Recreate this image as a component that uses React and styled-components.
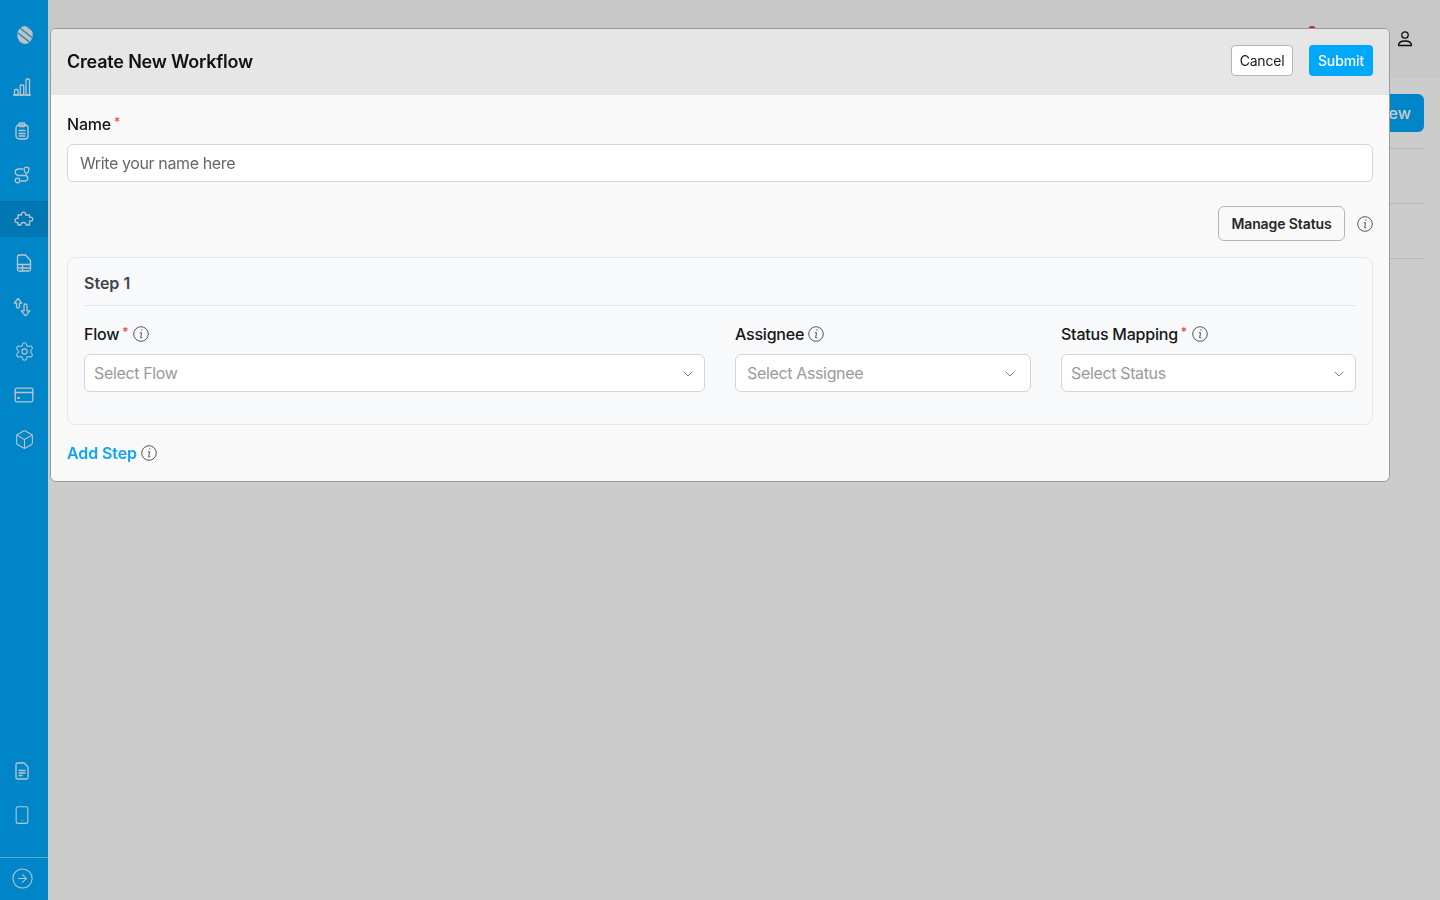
import React from "react";
import styled, { createGlobalStyle } from "styled-components";
import { Settings, Box, ChevronDown, Smartphone, CircleArrowRight } from "lucide-react";

const Global = createGlobalStyle`
  * { box-sizing: border-box; }
  html, body { margin: 0; height: 100%; }
  body { font-family: Inter, "Liberation Sans", sans-serif; background: #fff; overflow: hidden; }
`;

const Page = styled.div`display: flex; height: 900px; width: 1440px;`;
const Sidebar = styled.aside`width: 48px; flex: none; background: #00a8fb; display: flex; flex-direction: column; color: #e8f8ff;`;
const Logo = styled.div`height: 69px; display: flex; align-items: center; justify-content: center; padding: 1px 0 0 1px;`;
const NavList = styled.nav`display: flex; flex-direction: column; gap: 8px;`;
const NavItem = styled.div`
  height: 36px; display: flex; align-items: center; justify-content: center;
  padding-right: ${p => (p.$shift ? 4 : 0)}px;
  background: ${p => (p.$active ? "#0095df" : "transparent")};
`;
const Spacer = styled.div`flex: 1;`;
const SideBottom = styled(NavList)`padding-bottom: 24px;`;
const Collapse = styled.div`height: 43px; border-top: 1px solid #7fd0f8; display: flex; align-items: center; justify-content: center; padding: 0 4px 1px 0;`;

const Main = styled.main`flex: 1; min-width: 0; display: flex; flex-direction: column;`;
const TopBar = styled.header`height: 78px; background: #fafafa; display: flex; justify-content: flex-end; align-items: center; gap: 82px; padding: 0 26px 0 0; color: #111;`;
const BellSlot = styled.div`position: relative; width: 20px; height: 20px; margin-top: -2px;`;
const Dot = styled.span`position: absolute; left: 14px; top: -2px; width: 8px; height: 8px; border-radius: 50%; background: #ef3b2d;`;
const UserSlot = styled.div`display: flex;`;
const Content = styled.section`padding: 16px 16px 0 16px;`;
const ContentHead = styled.div`display: flex; justify-content: flex-end; margin-bottom: 16px;`;
const AddNew = styled.button`height: 38px; padding: 0 13px; border: 0; border-radius: 6px; background: #00a8fb; color: #fff; font: 500 16px Inter, sans-serif;`;
const Row = styled.div`height: 55px; border-top: 1px solid #e5e7eb; &:last-child { border-bottom: 1px solid #e5e7eb; height: 56px; }`;

const Backdrop = styled.div`position: fixed; inset: 0; background: rgba(0, 0, 0, 0.2);`;
const Modal = styled.div`
  position: fixed; left: 50px; top: 28px; width: 1340px; height: 454px;
  background: #f9f9f9; border: 1px solid #9a9a9a; border-radius: 6px; overflow: hidden;
  display: flex; flex-direction: column;
`;
const ModalHead = styled.div`height: 66px; flex: none; background: #e6e6e6; display: flex; align-items: center; padding: 0 16px; gap: 16px;`;
const Title = styled.h2`margin: 0 auto 0 0; font-size: 18px; font-weight: 600; color: #111; line-height: 24px; letter-spacing: -0.2px;`;
const BaseButton = styled.button`border-radius: 4px; font-family: Inter, sans-serif; font-size: 14px; height: 31px; padding: 0; cursor: pointer; margin-bottom: 4px;`;
const CancelButton = styled(BaseButton)`width: 62px; background: #fff; color: #1a1a1a; border: 1px solid #b5b5b5; font-weight: 400; letter-spacing: -0.2px;`;
const SubmitButton = styled(BaseButton)`width: 64px; background: #00a8fb; color: #fff; border: 0; font-weight: 500; letter-spacing: -0.1px;`;

const ModalBody = styled.div`padding: 19px 16px 0; display: flex; flex-direction: column;`;
const Label = styled.label`display: flex; align-items: center; height: 20px; font-size: 16px; font-weight: 500; color: #161616; line-height: 20px; letter-spacing: -0.22px;`;
const Star = styled.sup`color: #ef4444; font-size: 12px; line-height: 12px; margin-left: 3px; align-self: flex-start; margin-top: 2px; vertical-align: baseline;`;
const TextInput = styled.input`
  margin-top: 10px; height: 38px; width: 100%; border: 1px solid #d4d4d8; border-radius: 6px; background: #fff;
  padding: 0 12px; font: 400 16px Inter, sans-serif; color: #222; letter-spacing: -0.38px;
  &::placeholder { color: #666; opacity: 1; }
`;
const ManageRow = styled.div`margin-top: 24px; display: flex; justify-content: flex-end; align-items: center; gap: 12px;`;
const ManageButton = styled.button`height: 35px; width: 127px; padding: 0; border: 1px solid #b5b5b5; border-radius: 6px; background: #f9f9f9; color: #27272a; font: 600 14px Inter, sans-serif; letter-spacing: -0.1px;`;
const StepCard = styled.div`margin-top: 16px; height: 168px; border: 1px solid #e5e7eb; border-radius: 8px; background: #f8f9fb; padding: 0 16px;`;
const StepTitle = styled.div`height: 48px; border-bottom: 1px solid #e2e4e8; display: flex; align-items: center; font-size: 16px; font-weight: 600; color: #3f444b; padding-top: 3px;`;
const Fields = styled.div`display: grid; grid-template-columns: 621fr 296fr 295fr; gap: 30px; margin-top: 18px;`;
const Field = styled.div`display: flex; flex-direction: column; gap: 10px; min-width: 0;`;
const InfoWrap = styled.span`display: inline-flex; margin-left: ${p => p.$ml ?? 4}px; color: #555;`;
const Select = styled.div`
  height: 38px; border: 1px solid #d1d5db; border-radius: 6px; background: #fff; display: flex; align-items: center; justify-content: space-between;
  padding: 0 ${p => p.$pr ?? 8}px 0 ${p => p.$pl ?? 9}px; color: #9a9a9a; font-size: 16px; letter-spacing: -0.35px;
  svg { color: #808080; margin-top: 2px; }
`;
const AddStep = styled.div`margin-top: 18px; display: flex; align-items: center; height: 20px; color: #0ea5f5; font-size: 16px; font-weight: 600; letter-spacing: -0.1px;`;

const Info = ({ size = 16 }) => (
  <svg width={size} height={size} viewBox="0 0 16 16" fill="none" stroke="currentColor" strokeWidth="1">
    <circle cx="8" cy="8" r="7.3" />
    <path d="M8.900 3.600v1" strokeWidth="1.300" />
    <path d="M6.800 6.800h1.800l-1 5h1.600" strokeLinejoin="round" />
  </svg>
);
const LogoMark = () => (
  <svg width="16" height="18" viewBox="0 0 16 18">
    <defs>
      <clipPath id="logo-clip"><ellipse cx="8" cy="9" rx="7.800" ry="8.900" /></clipPath>
    </defs>
    <g clipPath="url(#logo-clip)">
      <rect width="16" height="18" fill="#f2f2f2" />
      <path d="M-1-1 17 13M-3 4 15 18M3-5 21 9" stroke="#00a8fb" strokeWidth="1.200" fill="none" />
    </g>
  </svg>
);
const Ic = ({ children, w = 20, h = 20, vb = "0 0 20 20", sw = 1.3 }) => (
  <svg width={w} height={h} viewBox={vb} fill="none" stroke="currentColor" strokeWidth={sw} strokeLinecap="round" strokeLinejoin="round">{children}</svg>
);
const Chart = () => <Ic><path d="M1.500 18h17" /><rect x="2.500" y="12.500" width="3.500" height="5.500" rx="1" /><rect x="8.200" y="8" width="3.500" height="10" rx="1" /><rect x="14" y="2" width="3.500" height="16" rx="1" /></Ic>;
const Clipboard = () => <Ic><rect x="4" y="4" width="12" height="14" rx="3" /><rect x="7" y="2" width="6" height="3.500" rx="1" /><path d="M7 9.500h6M7 12.500h6M7 15h6" /></Ic>;
const RouteIcon = () => <Ic><path d="M14.500 9c-1.500-1.700-2.500-2.800-2.500-4.400a2.500 2.500 0 0 1 5 0c0 1.600-1 2.700-2.500 4.400Z" /><circle cx="5.500" cy="15.500" r="2.300" /><path d="M10.500 4H6.500a3 3 0 0 0 0 6.500h7a2.800 2.800 0 0 1 0 5.500H9" /></Ic>;
const PuzzleIcon = () => <Ic><path d="M4 6H7.500c-.5-1.500.4-2.800 2-2.800s2.500 1.300 2 2.800H15.500v2.500c1.300-.5 3.300-.2 3.300 1.700s-2 2.200-3.300 1.700V16H12c.4-1.500-.8-2.500-2.500-2.500S6.600 14.500 7 16H4v-2.700c-1.200.5-3 .2-3-1.800s1.800-2.300 3-1.800Z" /></Ic>;
const DocTable = () => <Ic><path d="M3.500 3.500A1.500 1.500 0 0 1 5 2h6.500l5 5.500v9A1.500 1.500 0 0 1 15 18H5a1.500 1.500 0 0 1-1.500-1.500Z" /><path d="M3.500 11.500h13M3.500 15h13M8.500 11.500V18" /></Ic>;
const Swap = () => <Ic><path d="M6 1.500 2.200 6.200h2.300v3.300c0 .9.600 1.500 1.500 1.500s1.500-.6 1.500-1.500V6.200h2.300Z" /><path d="M13.500 18.800 17.800 13.800h-2.800V8.500c0-.9-.6-1.500-1.500-1.500S12 7.600 12 8.500v5.300H9.200Z" /></Ic>;
const Card = () => <Ic><rect x="1.200" y="3.200" width="17.600" height="13.600" rx="1.800" /><path d="M1.200 7.500h17.600" /><path d="M4 13h1.200" strokeWidth="1.800" /></Ic>;
const FileLines = () => <Ic><path d="M4 3.500A1.500 1.500 0 0 1 5.500 2H12l4 4v10.500a1.500 1.500 0 0 1-1.500 1.500h-9A1.500 1.500 0 0 1 4 16.500Z" /><path d="M7 9.500h6M7 12h6M7 14.500h3" /></Ic>;
const UserIcon = () => <Ic w={18} h={18} vb="0 0 18 18" sw={1.300}><circle cx="9" cy="5" r="3.200" /><path d="M2.500 15.500c0-3 2.500-4.500 6.500-4.500s6.500 1.500 6.500 4.500Z" /></Ic>;

const nav = [
  { icon: <Chart />, shift: true },
  { icon: <Clipboard />, shift: true },
  { icon: <RouteIcon />, shift: true },
  { icon: <PuzzleIcon />, active: true },
  { icon: <DocTable /> },
  { icon: <Swap />, shift: true },
  { icon: <Settings size={21} strokeWidth={1.200} /> },
  { icon: <Card /> },
  { icon: <Box size={21} strokeWidth={1.200} /> },
];

export default function App() {
  return (
    <>
      <Global />
      <Page>
        <Sidebar>
          <Logo><LogoMark /></Logo>
          <NavList>
            {nav.map((n, i) => <NavItem key={i} $active={n.active} $shift={n.shift}>{n.icon}</NavItem>)}
          </NavList>
          <Spacer />
          <SideBottom>
            <NavItem $shift><FileLines /></NavItem>
            <NavItem $shift><Smartphone size={20} strokeWidth={1.300} /></NavItem>
          </SideBottom>
          <Collapse><CircleArrowRight size={23} strokeWidth={1.100} /></Collapse>
        </Sidebar>
        <Main>
          <TopBar>
            <BellSlot><Dot /></BellSlot>
            <UserSlot><UserIcon /></UserSlot>
          </TopBar>
          <Content>
            <ContentHead><AddNew>Add New</AddNew></ContentHead>
            <Row /><Row />
          </Content>
        </Main>
      </Page>
      <Backdrop />
      <Modal>
        <ModalHead>
          <Title>Create New Workflow</Title>
          <CancelButton>Cancel</CancelButton>
          <SubmitButton>Submit</SubmitButton>
        </ModalHead>
        <ModalBody>
          <Label>Name<Star>*</Star></Label>
          <TextInput placeholder="Write your name here" />
          <ManageRow>
            <ManageButton>Manage Status</ManageButton>
            <InfoWrap $ml={0}><Info /></InfoWrap>
          </ManageRow>
          <StepCard>
            <StepTitle>Step 1</StepTitle>
            <Fields>
              <Field>
                <Label>Flow<Star>*</Star><InfoWrap $ml={5}><Info /></InfoWrap></Label>
                <Select>Select Flow<ChevronDown size={16} strokeWidth={1.500} /></Select>
              </Field>
              <Field>
                <Label>Assignee<InfoWrap><Info /></InfoWrap></Label>
                <Select $pl={11} $pr={12}>Select Assignee<ChevronDown size={16} strokeWidth={1.500} /></Select>
              </Field>
              <Field>
                <Label>Status Mapping<Star>*</Star><InfoWrap $ml={5}><Info /></InfoWrap></Label>
                <Select>Select Status<ChevronDown size={16} strokeWidth={1.500} /></Select>
              </Field>
            </Fields>
          </StepCard>
          <AddStep>Add Step<InfoWrap><Info /></InfoWrap></AddStep>
        </ModalBody>
      </Modal>
    </>
  );
}
